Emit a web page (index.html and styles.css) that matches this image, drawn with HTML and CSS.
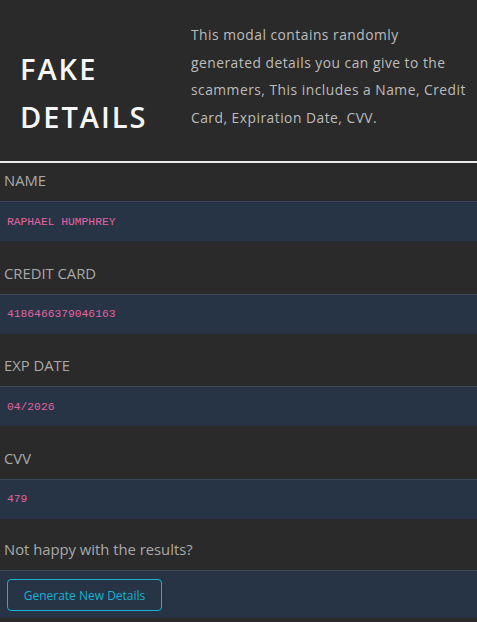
FILE: index.html
```html
<!DOCTYPE html>
<html>
<head>
<meta charset="utf-8">
<link rel="stylesheet" href="styles.css">
</head>
<body>
<div class="modal">
  <div class="header">
    <h1 class="title">FAKE<br>DETAILS</h1>
    <p class="desc">This modal contains randomly<br>generated details you can give to the<br>scammers, This includes a Name, Credit<br>Card, Expiration Date, CVV.</p>
  </div>
  <div class="field">
    <div class="label">NAME</div>
    <div class="value">RAPHAEL HUMPHREY</div>
  </div>
  <div class="field">
    <div class="label">CREDIT CARD</div>
    <div class="value">4186466379046163</div>
  </div>
  <div class="field">
    <div class="label">EXP DATE</div>
    <div class="value">04/2026</div>
  </div>
  <div class="field">
    <div class="label">CVV</div>
    <div class="value">479</div>
  </div>
  <div class="note">Not happy with the results?</div>
  <div class="footer">
    <button class="btn">Generate New Details</button>
  </div>
</div>
</body>
</html>
```

FILE: styles.css
```css
html, body {
  margin: 0;
  padding: 0;
  background: #2a2a2a;
}
body {
  font-family: "Open Sans", "Noto Sans", sans-serif;
}
.modal {
  display: flex;
  flex-direction: column;
}
.header {
  display: flex;
  align-items: flex-start;
  border-bottom: 2px solid #ececec;
  box-sizing: border-box;
  height: 163px;
}
.title {
  margin: 0;
  padding: 45px 0 0 20px;
  width: 171px;
  flex: none;
  font-size: 29px;
  line-height: 48px;
  letter-spacing: 2px;
  font-weight: 600;
  color: #f7f7f7;
}
.desc {
  margin: 0;
  padding: 21px 6px 0 0;
  font-size: 13.8px;
  line-height: 27.5px;
  letter-spacing: 0.5px;
  white-space: nowrap;
  color: #bcbcbc;
}
.field + .field {
  margin-top: 14.5px;
}
.label, .note {
  box-sizing: border-box;
  height: 38px;
  display: flex;
  align-items: center;
  padding: 0 0 4px 4px;
  font-size: 14.8px;
  color: #a9a9a9;
}
.value {
  height: 39px;
  border-top: 1px solid #3a4858;
  background: #263445;
  display: flex;
  align-items: center;
  padding-left: 7px;
  font-family: "Liberation Mono", monospace;
  font-size: 11.3px;
  color: #e2639f;
}
.note {
  margin-top: 13.5px;
}
.footer {
  border-top: 1px solid #3a4858;
  background: #263445;
  padding: 8px 7px 7px;
}
.btn {
  display: block;
  width: 155px;
  height: 32px;
  border: 1px solid #17b2d6;
  border-radius: 4px;
  background: transparent;
  color: #18b0d4;
  font-family: "Open Sans", "Noto Sans", sans-serif;
  font-size: 12px;
  padding: 0;
}
```
